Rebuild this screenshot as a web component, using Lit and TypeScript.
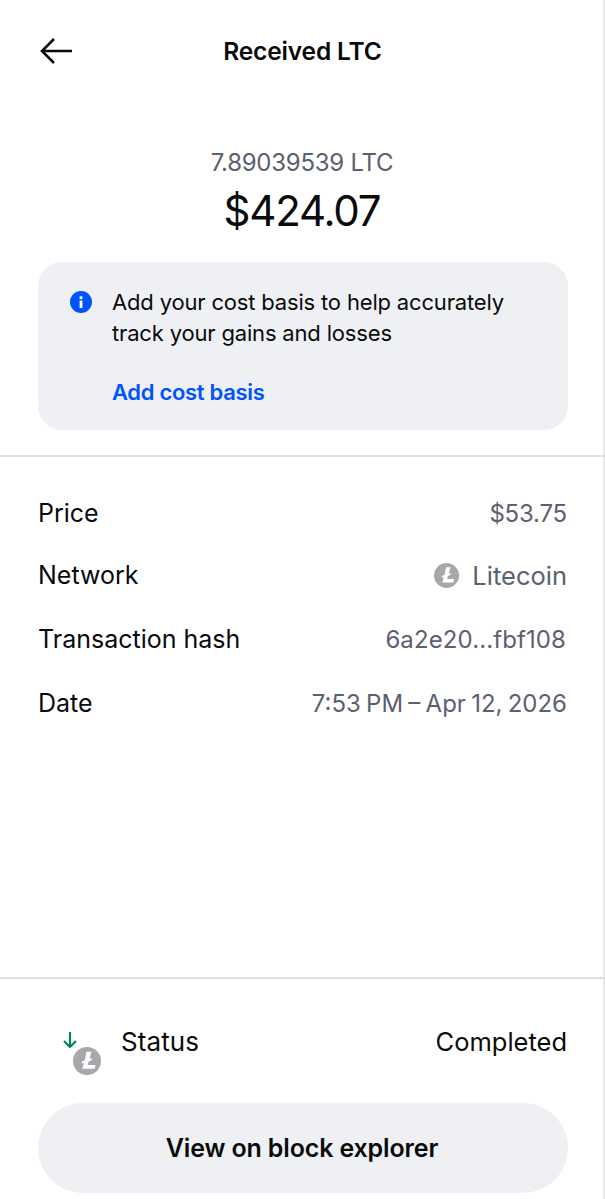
import { LitElement, html, css } from "lit";
import { customElement } from "lit/decorators.js";

const ltc = (size: number) => html`<svg class="ltc" width=${size} height=${size} viewBox="0 0 28 28">
  <circle cx="14" cy="14" r="14" fill="#a6a8ab"></circle>
  <path d="M13.500 4.800h5l-2.100 7.200 2.700-1-.7 2.500-2.800 1-1 3.500h8l-1 3.700H9.300l1.700-5.900-2.400.9.600-2.400 2.500-.9z" fill="#fff"></path>
</svg>`;

@customElement("app-root")
export class AppRoot extends LitElement {
  static styles = css`
    :host { display: block; width: 605px; height: 1199px; background: #fff; font-family: Inter, "Liberation Sans", sans-serif; color: #0a0b0d; overflow: hidden; }
    * { box-sizing: border-box; }
    .page { display: flex; flex-direction: column; height: 1199px; border-right: 2px solid #e8e9eb; }
    .top { height: 457px; border-bottom: 2px solid #dfe0e2; padding: 0 37px 0 38px; display: flex; flex-direction: column; margin-right: -2px; flex: none; }
    .header { height: 103px; padding-top: 38px; position: relative; flex: none; }
    .back { display: block; margin-left: 2px; }
    .title { position: absolute; left: 0; right: 1px; top: 36px; text-align: center; font-size: 24.5px; line-height: 30px; font-weight: 600; letter-spacing: -0.15px; }
    .amount { text-align: center; flex: none; padding: 45px 2px 0 0; }
    .crypto { font-size: 24px; line-height: 30px; color: #5b616e; font-weight: 400; letter-spacing: -0.25px; }
    .fiat { font-size: 42px; line-height: 50px; font-weight: 400; letter-spacing: -1.2px; margin-top: 8px; }
    .card { background: #eef0f3; border-radius: 24px; height: 168px; margin-top: 26px; padding: 26px 32px; display: flex; gap: 20px; flex: none; }
    .info { flex: none; margin-top: 3px; }
    .msg { font-size: 22px; line-height: 31px; letter-spacing: -0.17px; margin-top: -1px; white-space: nowrap; }
    .link { font-size: 22px; line-height: 30px; font-weight: 600; color: #0052ff; margin-top: 28px; letter-spacing: -0.3px; }
    .rows { flex: 1; padding: 24px 36px 0 38px; display: flex; flex-direction: column; }
    .row { display: flex; justify-content: space-between; align-items: center; height: 64px; font-size: 25px; flex: none; }
    .row.net { margin-top: -2px; }
    .v { color: #5b616e; display: flex; align-items: center; gap: 13px; font-size: 24px; }
    .v.price { letter-spacing: -0.2px; }
    .v.coin { font-size: 25.5px; }
    .v.hash { letter-spacing: 0.1px; margin-right: 1px; }
    .v.date { word-spacing: -1.5px; }
    .bottom { height: 222px; border-top: 2px solid #dfe0e2; margin-right: -2px; padding: 0 37px 0 38px; display: flex; flex-direction: column; flex: none; }
    .status { display: flex; align-items: center; justify-content: space-between; height: 124px; font-size: 25.5px; flex: none; padding-right: 1px; }
    .sl { display: flex; align-items: center; gap: 20px; font-size: 26px; letter-spacing: 0.1px; }
    .sicon { width: 63px; height: 50px; position: relative; flex: none; }
    .sicon .arrow { position: absolute; left: 25px; top: 16px; }
    .sicon .ltc { position: absolute; left: 35px; top: 31px; }
    .btn { height: 90px; border-radius: 45px; background: #eef0f3; display: flex; align-items: center; justify-content: center; font-size: 25px; font-weight: 600; letter-spacing: -0.15px; flex: none; padding-right: 2px; }
  `;

  render() {
    return html`<div class="page">
      <div class="top">
        <div class="header">
          <svg class="back" width="32" height="26" viewBox="0 0 32 26" fill="none" stroke="#0a0b0d" stroke-width="2.600">
            <path d="M32 13H2.500M14 1 2 13l12 12"></path>
          </svg>
          <div class="title">Received LTC</div>
        </div>
        <div class="amount">
          <div class="crypto">7.89039539 LTC</div>
          <div class="fiat">$424.07</div>
        </div>
        <div class="card">
          <svg class="info" width="22" height="22" viewBox="0 0 22 22">
            <circle cx="11" cy="11" r="11" fill="#0052ff"></circle>
            <rect x="9.600" y="9.500" width="2.800" height="7.500" fill="#fff"></rect>
            <rect x="9.600" y="5.300" width="2.800" height="2.800" fill="#fff"></rect>
          </svg>
          <div>
            <div class="msg">Add your cost basis to help accurately<br />track your gains and losses</div>
            <div class="link">Add cost basis</div>
          </div>
        </div>
      </div>
      <div class="rows">
        <div class="row"><span>Price</span><span class="v price">$53.75</span></div>
        <div class="row net"><span>Network</span><span class="v coin">${ltc(25)}Litecoin</span></div>
        <div class="row"><span>Transaction hash</span><span class="v hash">6a2e20...fbf108</span></div>
        <div class="row"><span>Date</span><span class="v date">7:53 PM – Apr 12, 2026</span></div>
      </div>
      <div class="bottom">
        <div class="status">
          <div class="sl">
            <div class="sicon">
              <svg class="arrow" width="14" height="17" viewBox="0 0 14 17" fill="none" stroke="#098551" stroke-width="2.200"><path d="M7 0v15M1 9l6 6 6-6"></path></svg>
              ${ltc(28)}
            </div>
            <span>Status</span>
          </div>
          <span>Completed</span>
        </div>
        <div class="btn">View on block explorer</div>
      </div>
    </div>`;
  }
}
